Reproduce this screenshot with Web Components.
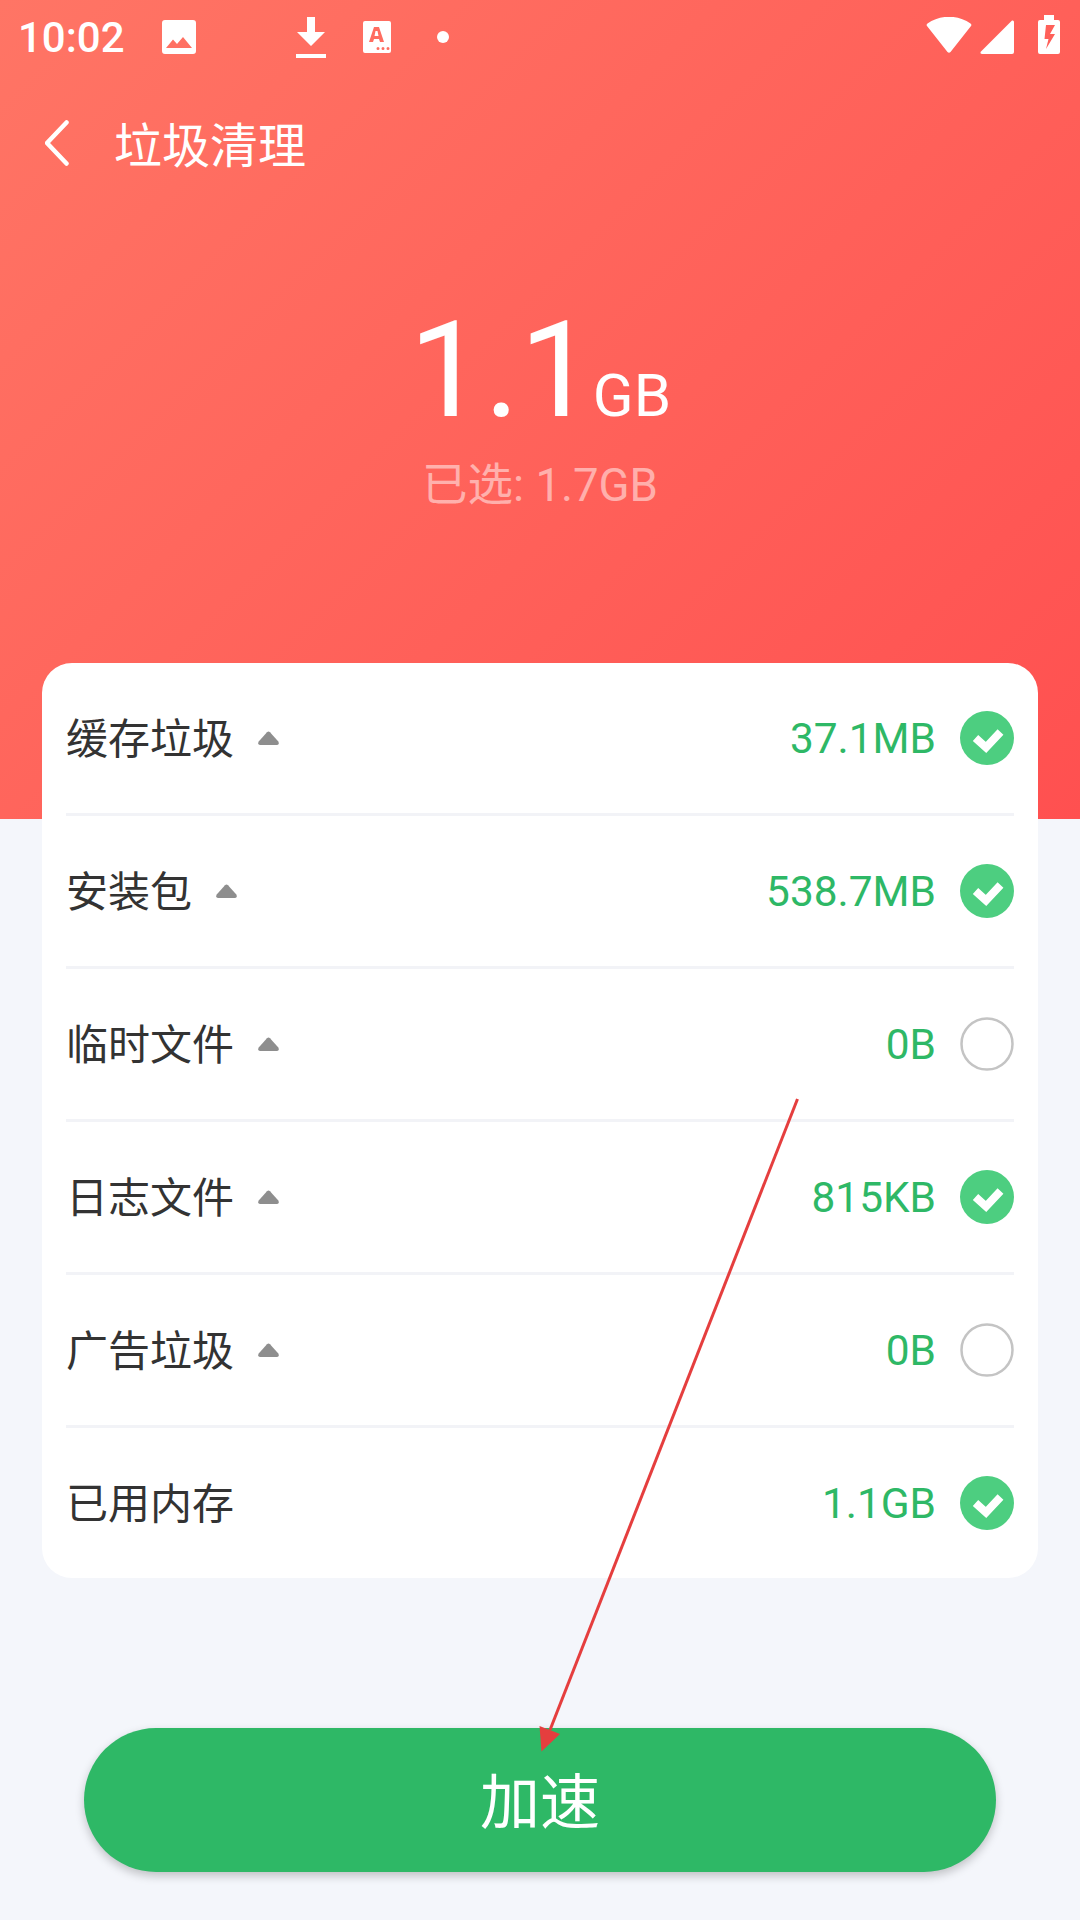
<!DOCTYPE html>
<html lang="zh-CN">
<head>
<meta charset="utf-8">
<title>垃圾清理</title>
<style>
  html, body { margin: 0; padding: 0; }
  body {
    width: 1080px;
    height: 1920px;
    position: relative;
    overflow: hidden;
    background: #f4f6fb;
    font-family: Roboto, "Noto Sans CJK SC", sans-serif;
  }
</style>
</head>
<body>
  <clean-screen>
    <status-bar slot="top" time="10:02"></status-bar>
    <app-header slot="top">垃圾清理</app-header>
    <size-summary slot="top" size="1.1" unit="GB">已选: 1.7GB</size-summary>

    <clean-card>
      <clean-row caret checked><span>缓存垃圾</span><span slot="value">37.1MB</span></clean-row>
      <clean-row caret checked><span>安装包</span><span slot="value">538.7MB</span></clean-row>
      <clean-row caret><span>临时文件</span><span slot="value">0B</span></clean-row>
      <clean-row caret checked><span>日志文件</span><span slot="value">815KB</span></clean-row>
      <clean-row caret><span>广告垃圾</span><span slot="value">0B</span></clean-row>
      <clean-row checked><span>已用内存</span><span slot="value">1.1GB</span></clean-row>
    </clean-card>

    <speed-button slot="bottom">加速</speed-button>
  </clean-screen>
  <arrow-note></arrow-note>

<script>
class CleanScreen extends HTMLElement {
  connectedCallback() {
    this.attachShadow({ mode: 'open' });
    this.shadowRoot.innerHTML = `
      <style>
        :host { display: block; width: 1080px; height: 1920px; }
        .hero {
          height: 819px;
          background: linear-gradient(135deg, #ff7565 0%, #ff5050 100%);
        }
        .middle { margin: -156px 42px 0; }
        .bottom { margin: 150px 84px 0; }
      </style>
      <div class="hero"><slot name="top"></slot></div>
      <div class="middle"><slot></slot></div>
      <div class="bottom"><slot name="bottom"></slot></div>
    `;
  }
}

class StatusBar extends HTMLElement {
  connectedCallback() {
    this.attachShadow({ mode: 'open' });
    this.shadowRoot.innerHTML = `
      <style>
        :host {
          display: flex;
          align-items: center;
          height: 74px;
          padding: 0 20px 0 18px;
          color: #fff;
          font: 500 42px Roboto, sans-serif;
        }
        svg { display: block; fill: #fff; flex: none; }
        .time { width: 144px; }
        .spacer { flex: 1; }
      </style>
      <span class="time">${this.getAttribute('time')}</span>
      <svg width="34" height="34" viewBox="0 0 34 34">
        <path fill-rule="evenodd" d="M3 0h28a3 3 0 0 1 3 3v28a3 3 0 0 1-3 3H3a3 3 0 0 1-3-3V3a3 3 0 0 1 3-3zM4 28H30L21 17 15 24 11 19.500z"/>
      </svg>
      <svg style="margin-left:100px" width="30" height="41" viewBox="0 0 30 41">
        <path d="M11 0h8v15h10L15 29 1 15h10zM0 37h30v4H0z"/>
      </svg>
      <svg style="margin-left:37px" width="28" height="32" viewBox="0 0 28 32">
        <path fill-rule="evenodd" d="M2 0h24a2 2 0 0 1 2 2v28a2 2 0 0 1-2 2H2a2 2 0 0 1-2-2V2a2 2 0 0 1 2-2zM11 6 6 21h4l1-3h5l1 3h4L16 6zM12.500 10h2l1 5h-4zM15 26a1.500 1.500 0 1 0 0 3 1.500 1.500 0 0 0 0-3zM20 26a1.500 1.500 0 1 0 0 3 1.500 1.500 0 0 0 0-3zM25 26a1.500 1.500 0 1 0 0 3 1.500 1.500 0 0 0 0-3z"/>
      </svg>
      <svg style="margin-left:46px" width="12" height="12" viewBox="0 0 12 12"><circle cx="6" cy="6" r="6"/></svg>
      <span class="spacer"></span>
      <svg style="margin-top:-4px" width="46" height="36" viewBox="0 0 46 36">
        <path d="M1 9Q0 8 1.500 6.500C14 -2.500 32 -2.500 44.500 6.500Q46 8 45 9L24.500 35Q23 36.500 21.500 35z"/>
      </svg>
      <svg style="margin-left:8px" width="34" height="34" viewBox="0 0 34 34">
        <path d="M32 0.500Q34 0 34 2v30q0 2-2 2H2Q0 34 0.500 32z"/>
      </svg>
      <svg style="margin-left:24px;margin-top:-5px" width="22" height="39" viewBox="0 0 22 39">
        <path fill-rule="evenodd" d="M6 0h10v5h4a2 2 0 0 1 2 2v30a2 2 0 0 1-2 2H2a2 2 0 0 1-2-2V7a2 2 0 0 1 2-2h4zM8 10l-1.500 14h4L8 34l9-15h-5l5-9z"/>
      </svg>
    `;
  }
}

class AppHeader extends HTMLElement {
  connectedCallback() {
    this.attachShadow({ mode: 'open' });
    this.shadowRoot.innerHTML = `
      <style>
        :host {
          display: flex;
          align-items: center;
          height: 138px;
          padding-left: 45px;
          color: #fff;
          font: 400 48px "Noto Sans CJK SC", sans-serif;
        }
        svg { display: block; flex: none; margin-right: 45px; }
        .title { margin-top: -2px; }
      </style>
      <svg width="24" height="46" viewBox="0 0 24 46">
        <path d="M21.500 2.500 2 23l19.500 20.500" fill="none" stroke="#fff" stroke-width="4.500" stroke-linecap="round" stroke-linejoin="round"/>
      </svg>
      <span class="title"><slot></slot></span>
    `;
  }
}

class SizeSummary extends HTMLElement {
  connectedCallback() {
    this.attachShadow({ mode: 'open' });
    this.shadowRoot.innerHTML = `
      <style>
        :host {
          display: block;
          margin-top: 84px;
          text-align: center;
          color: #fff;
          font-family: Roboto, "Noto Sans CJK SC", sans-serif;
        }
        .total { height: 150px; line-height: 150px; white-space: nowrap; }
        .size { font-size: 134px; font-weight: 400; }
        .unit { font-size: 60px; margin-left: -2px; }
        .picked {
          margin-top: 12px;
          font-size: 45.500px;
          line-height: 56px;
          color: rgba(255, 255, 255, 0.5);
        }
      </style>
      <div class="total"><span class="size">${this.getAttribute('size')}</span><span class="unit">${this.getAttribute('unit')}</span></div>
      <div class="picked"><slot></slot></div>
    `;
  }
}

class CleanCard extends HTMLElement {
  connectedCallback() {
    this.attachShadow({ mode: 'open' });
    this.shadowRoot.innerHTML = `
      <style>
        :host {
          display: block;
          background: #fff;
          border-radius: 30px;
          padding: 0 24px;
        }
      </style>
      <slot></slot>
    `;
  }
}

class CleanRow extends HTMLElement {
  connectedCallback() {
    const checked = this.hasAttribute('checked');
    const caret = this.hasAttribute('caret');
    this.attachShadow({ mode: 'open' });
    this.shadowRoot.innerHTML = `
      <style>
        :host {
          display: flex;
          align-items: center;
          height: 150px;
          border-bottom: 3px solid #f2f3f7;
          color: #333;
          font: 400 42px Roboto, "Noto Sans CJK SC", sans-serif;
        }
        :host(:last-child) { border-bottom: 0; }
        .label { margin-top: -5px; }
        .caret { margin-left: 24px; display: block; }
        .spacer { flex: 1; }
        .value { color: #2eb866; margin-right: 24px; font-size: 42.400px; }
        .mark { display: block; flex: none; }
      </style>
      <span class="label"><slot></slot></span>
      ${caret ? `<svg class="caret" width="21" height="14" viewBox="0 0 21 14">
        <path d="M9 1.200Q10.500 -0.300 12 1.200L20.300 10.600Q21.700 14 19 14H2Q-0.700 14 0.700 10.600z" fill="#8e8e8e"/>
      </svg>` : ''}
      <span class="spacer"></span>
      <span class="value"><slot name="value"></slot></span>
      <svg class="mark" width="54" height="54" viewBox="0 0 54 54">
        ${checked
          ? `<circle cx="27" cy="27" r="27" fill="#4dce80"/>
             <path d="M15.500 27 26 36.500 40.500 21" fill="none" stroke="#fff" stroke-width="8"/>`
          : `<circle cx="27" cy="27" r="25.500" fill="#fff" stroke="#c4c4c4" stroke-width="2.500"/>`}
      </svg>
    `;
  }
}

class SpeedButton extends HTMLElement {
  connectedCallback() {
    this.attachShadow({ mode: 'open' });
    this.shadowRoot.innerHTML = `
      <style>
        :host {
          display: flex;
          align-items: center;
          justify-content: center;
          height: 144px;
          padding-bottom: 6px;
          box-sizing: border-box;
          border-radius: 72px;
          background: #2eb866;
          box-shadow: 0 4px 10px rgba(0, 0, 0, 0.22);
          color: #fff;
          font: 400 60px "Noto Sans CJK SC", sans-serif;
        }
      </style>
      <slot></slot>
    `;
  }
}

// red annotation drawn over the page
class ArrowNote extends HTMLElement {
  connectedCallback() {
    this.attachShadow({ mode: 'open' });
    this.shadowRoot.innerHTML = `
      <style>
        :host { position: absolute; left: 0; top: 0; width: 1080px; height: 1920px; pointer-events: none; }
        svg { display: block; }
      </style>
      <svg width="1080" height="1920" viewBox="0 0 1080 1920">
        <path d="M797.500 1099 550 1730" stroke="#e53e3e" stroke-width="3" fill="none"/>
        <path d="M539.500 1726 560 1734 541.500 1751.500z" fill="#e53e3e"/>
      </svg>
    `;
  }
}

customElements.define('clean-screen', CleanScreen);
customElements.define('status-bar', StatusBar);
customElements.define('app-header', AppHeader);
customElements.define('size-summary', SizeSummary);
customElements.define('clean-card', CleanCard);
customElements.define('clean-row', CleanRow);
customElements.define('speed-button', SpeedButton);
customElements.define('arrow-note', ArrowNote);
</script>
</body>
</html>
